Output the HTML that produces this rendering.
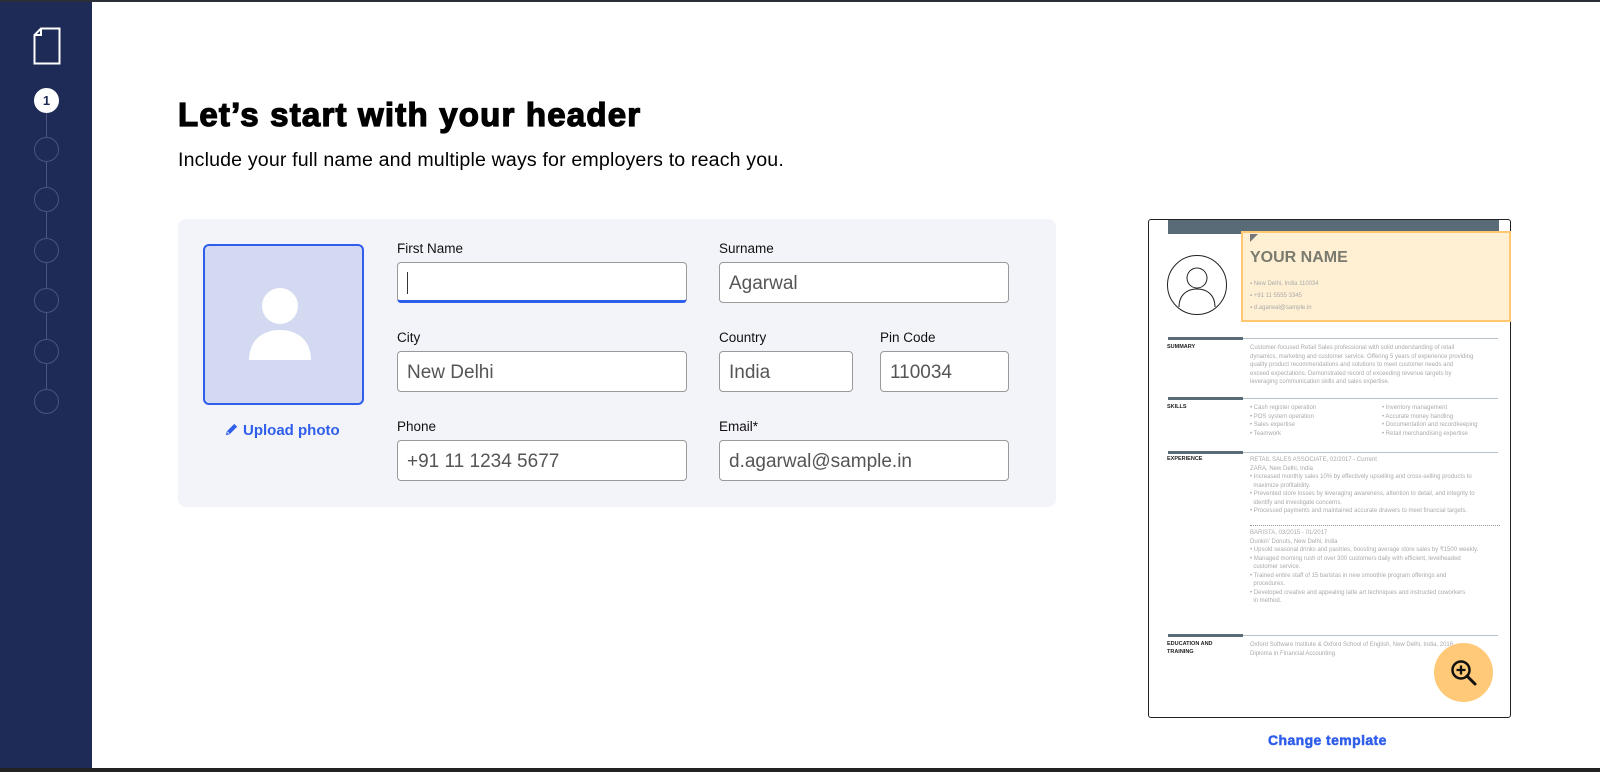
<!DOCTYPE html>
<html><head><meta charset="utf-8"><style>
*{box-sizing:border-box;margin:0;padding:0}
body{width:1600px;height:772px;position:relative;overflow:hidden;background:#fff;font-family:"Liberation Sans",sans-serif;color:#000}
.abs{position:absolute}
#top{left:0;top:0;width:1600px;height:2px;background:#2b2f38}
#bot{left:0;top:768px;width:1600px;height:4px;background:#222}
#side{left:0;top:2px;width:92px;height:766px;background:#1f2b57}
.step{position:absolute;left:34px;width:25px;height:25px;border-radius:50%;border:1px solid #4a557c}
.vline{position:absolute;left:46px;width:1px;background:#4a557c}
h1{position:absolute;left:178px;top:96px;font-size:33px;font-weight:900;letter-spacing:1.2px;white-space:nowrap;-webkit-text-stroke:1.3px #000}
.sub{position:absolute;left:178px;top:149px;font-size:19.6px;white-space:nowrap;letter-spacing:0.15px}
#card{left:178px;top:219px;width:878px;height:288px;background:#f3f4f9;border-radius:8px}
#photo{left:203px;top:244px;width:161px;height:161px;background:#d3d9f0;border:2px solid #2f5eea;border-radius:6px}
.lbl{position:absolute;font-size:13.5px;color:#111}
.inp{position:absolute;height:41px;background:#fff;border:1px solid #9a9a9a;border-radius:4px;font-size:19px;color:#555;padding:10px 0 0 9px;white-space:nowrap}
.rt{font-size:6px;color:#aaa;line-height:8.5px;position:absolute;white-space:nowrap}
.sl{position:absolute;left:1168px;width:330px;height:1px;background:#b8c0c8}
.sl b{position:absolute;left:0;top:-1px;width:75px;height:3px;background:#5a6b78}
.sh{position:absolute;left:1167px;font-size:5.5px;font-weight:bold;color:#222;line-height:7.5px}
</style></head><body>
<div class="abs" id="top"></div>
<div class="abs" id="side">
<svg class="abs" style="left:32px;top:25px" width="30" height="38" viewBox="0 0 30 38"><path d="M9 1.5H27.5V36.5H2.5V8Z" fill="none" stroke="#fff" stroke-width="2"/><path d="M2.5 8H9V1.5" fill="none" stroke="#fff" stroke-width="2"/></svg>
<div class="vline" style="top:110px;height:285px"></div>
<div class="step" style="top:86px;background:#fff;border-color:#fff;font-size:13px;font-weight:bold;color:#1f2b57;text-align:center;line-height:24px">1</div>
<div class="step" style="top:135px;background:#1f2b57"></div>
<div class="step" style="top:185px;background:#1f2b57"></div>
<div class="step" style="top:236px;background:#1f2b57"></div>
<div class="step" style="top:286px;background:#1f2b57"></div>
<div class="step" style="top:337px;background:#1f2b57"></div>
<div class="step" style="top:387px;background:#1f2b57"></div>
</div>
<div class="abs" id="bot"></div>
<h1>Let’s start with your header</h1>
<div class="sub">Include your full name and multiple ways for employers to reach you.</div>
<div class="abs" id="card"></div>
<div class="abs" id="photo">
<svg class="abs" style="left:43px;top:42px" width="64" height="72" viewBox="0 0 64 72"><circle cx="32" cy="18" r="18" fill="#fff"/><path d="M1 72C1 52 15 42 32 42S63 52 63 72Z" fill="#fff"/></svg>
</div>
<div class="abs" style="left:224px;top:422px;font-size:15px;font-weight:bold;color:#2f5eea;white-space:nowrap"><svg width="15" height="15" viewBox="0 0 16 16" style="vertical-align:-2px;margin-right:4px"><path d="M2 14L3 10L11 2L14 5L6 13Z" fill="#2f5eea"/><path d="M3.5 10.5L5.5 12.5" stroke="#f3f4f9" stroke-width="1"/></svg>Upload photo</div>
<div class="lbl" style="left:397px;top:241px">First Name</div>
<div class="inp" style="left:397px;top:262px;width:290px;border-bottom:3px solid #2f5eea"><span style="display:inline-block;width:1px;height:22px;background:#333;margin-top:-1px"></span></div>
<div class="lbl" style="left:719px;top:241px">Surname</div>
<div class="inp" style="left:719px;top:262px;width:290px">Agarwal</div>
<div class="lbl" style="left:397px;top:330px">City</div>
<div class="inp" style="left:397px;top:351px;width:290px">New Delhi</div>
<div class="lbl" style="left:719px;top:330px">Country</div>
<div class="inp" style="left:719px;top:351px;width:134px">India</div>
<div class="lbl" style="left:880px;top:330px">Pin Code</div>
<div class="inp" style="left:880px;top:351px;width:129px">110034</div>
<div class="lbl" style="left:397px;top:419px">Phone</div>
<div class="inp" style="left:397px;top:440px;width:290px">+91 11 1234 5677</div>
<div class="lbl" style="left:719px;top:419px">Email*</div>
<div class="inp" style="left:719px;top:440px;width:290px">d.agarwal@sample.in</div>

<div class="abs" style="left:1148px;top:219px;width:363px;height:499px;border:1px solid #222;border-radius:3px;overflow:hidden;background:#fff">
</div>
<div class="abs" style="left:1168px;top:220px;width:331px;height:14px;background:#5a6b78"></div>
<div class="abs" style="left:1241px;top:231px;width:270px;height:91px;background:#fff0d4;border:2px solid #ffc870"></div>
<div class="abs" style="left:1250px;top:234px;width:0;height:0;border-top:8px solid #777;border-right:8px solid transparent"></div>
<svg class="abs" style="left:1166px;top:254px" width="62" height="62" viewBox="0 0 62 62"><circle cx="31" cy="31" r="29.5" fill="none" stroke="#222" stroke-width="1"/><circle cx="31" cy="24" r="10" fill="none" stroke="#222" stroke-width="1"/><path d="M13 53C13 40 22 35 31 35S49 40 49 53" fill="none" stroke="#222" stroke-width="1"/></svg>
<div class="abs" style="left:1250px;top:249px;font-size:16px;font-weight:bold;color:#7a7a6e">YOUR NAME</div>
<div class="rt" style="left:1250px;top:280px">▪ New Delhi, India 110034</div>
<div class="rt" style="left:1250px;top:292px">▪ +91 11 5555 3345</div>
<div class="rt" style="left:1250px;top:304px">▪ d.agarwal@sample.in</div>
<div class="sl" style="top:338px"><b></b></div><div class="sh" style="top:344px">SUMMARY</div>
<div class="rt" style="left:1250px;top:344px">Customer-focused Retail Sales professional with solid understanding of retail<br>dynamics, marketing and customer service. Offering 5 years of experience providing<br>quality product recommendations and solutions to meet customer needs and<br>exceed expectations. Demonstrated record of exceeding revenue targets by<br>leveraging communication skills and sales expertise.</div>
<div class="sl" style="top:398px"><b></b></div><div class="sh" style="top:404px">SKILLS</div>
<div class="rt" style="left:1250px;top:404px">• Cash register operation<br>• POS system operation<br>• Sales expertise<br>• Teamwork</div>
<div class="rt" style="left:1382px;top:404px">• Inventory management<br>• Accurate money handling<br>• Documentation and recordkeeping<br>• Retail merchandising expertise</div>
<div class="sl" style="top:452px"><b></b></div><div class="sh" style="top:456px">EXPERIENCE</div>
<div class="rt" style="left:1250px;top:456px">RETAIL SALES ASSOCIATE, 02/2017 - Current<br>ZARA, New Delhi, India<br>• Increased monthly sales 10% by effectively upselling and cross-selling products to<br>&nbsp;&nbsp;maximize profitability.<br>• Prevented store losses by leveraging awareness, attention to detail, and integrity to<br>&nbsp;&nbsp;identify and investigate concerns.<br>• Processed payments and maintained accurate drawers to meet financial targets.</div>
<div class="abs" style="left:1250px;top:525px;width:250px;border-top:1px dotted #999"></div>
<div class="rt" style="left:1250px;top:529px">BARISTA, 03/2015 - 01/2017<br>Dunkin' Donuts, New Delhi, India<br>• Upsold seasonal drinks and pastries, boosting average store sales by ₹1500 weekly.<br>• Managed morning rush of over 300 customers daily with efficient, levelheaded<br>&nbsp;&nbsp;customer service.<br>• Trained entire staff of 15 baristas in new smoothie program offerings and<br>&nbsp;&nbsp;procedures.<br>• Developed creative and appealing latte art techniques and instructed coworkers<br>&nbsp;&nbsp;in method.</div>
<div class="sl" style="top:635px"><b></b></div><div class="sh" style="top:641px">EDUCATION AND<br>TRAINING</div>
<div class="rt" style="left:1250px;top:641px">Oxford Software Institute &amp; Oxford School of English, New Delhi, India, 2016<br>Diploma in Financial Accounting</div>
<div class="abs" style="left:1434px;top:643px;width:59px;height:59px;border-radius:50%;background:#ffc978"></div>
<svg class="abs" style="left:1450px;top:659px" width="28" height="28" viewBox="0 0 28 28"><circle cx="11" cy="11" r="8.5" fill="none" stroke="#111" stroke-width="2.5"/><path d="M17 17L25 25" stroke="#111" stroke-width="3" stroke-linecap="round"/><path d="M11 6.5V15.5M6.5 11H15.5" stroke="#111" stroke-width="2.3"/></svg>
<div class="abs" style="left:1268px;top:732px;font-size:14px;font-weight:900;color:#2f5eea;white-space:nowrap;letter-spacing:0.4px;-webkit-text-stroke:0.5px #2f5eea">Change template</div>
</body></html>
